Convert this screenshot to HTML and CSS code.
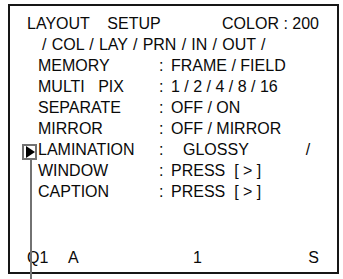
FILE: index.html
```html
<!DOCTYPE html>
<html>
<head>
<meta charset="utf-8">
<link rel="stylesheet" href="styles.css">
</head>
<body>
<div class="screen">
  <div class="head-row">
    <span class="title">LAYOUT    SETUP</span>
    <span class="color">COLOR : 200</span>
  </div>
  <div class="nav-row">/ COL / LAY / PRN / IN / OUT /</div>
  <div class="items">
    <span class="label">MEMORY</span><span class="colon">:</span><span class="value">FRAME / FIELD</span>
    <span class="label">MULTI   PIX</span><span class="colon">:</span><span class="value">1 / 2 / 4 / 8 / 16</span>
    <span class="label">SEPARATE</span><span class="colon">:</span><span class="value">OFF / ON</span>
    <span class="label">MIRROR</span><span class="colon">:</span><span class="value">OFF / MIRROR</span>
    <span class="label current"><span class="marker"><svg class="tri" viewBox="0 0 9 12" width="9" height="12"><polygon points="0,0 9,6 0,12" fill="#000"/></svg></span>LAMINATION</span><span class="colon">:</span><span class="value"><span class="glossy">GLOSSY</span><span class="slash">/</span></span>
    <span class="label">WINDOW</span><span class="colon">:</span><span class="value">PRESS  [ &gt; ]</span>
    <span class="label">CAPTION</span><span class="colon">:</span><span class="value">PRESS  [ &gt; ]</span>
  </div>
  <div class="footer">
    <span>Q1</span><span>A</span><span>1</span><span>S</span>
  </div>
</div>
</body>
</html>
```
FILE: styles.css
```css
html, body {
  margin: 0;
  padding: 0;
  background: #fff;
  overflow: hidden;
}
body {
  width: 343px;
  height: 279px;
  font-family: "Liberation Sans", Arial, sans-serif;
  font-size: 16px;
  color: #0a0a0a;
}
.screen {
  box-sizing: border-box;
  margin: 4px 0 0 8px;
  width: 331px;
  height: 270px;
  border: 2px solid #161616;
  padding-top: 6.5px;
  display: flex;
  flex-direction: column;
  line-height: 21px;
}
.head-row {
  display: flex;
  justify-content: space-between;
  padding: 0 18px 0 17px;
}
.title {
  white-space: pre;
}
.nav-row {
  padding-left: 32px;
  white-space: pre;
  word-spacing: 0.8px;
}
.items {
  display: grid;
  grid-template-columns: 121px 12px auto;
  padding-left: 28px;
}
.label, .value {
  white-space: pre;
}
.current {
  position: relative;
}
.marker {
  position: absolute;
  left: -16px;
  top: 5.5px;
  box-sizing: border-box;
  width: 15px;
  height: 16px;
  border: 2px solid #727272;
  display: flex;
  align-items: center;
  justify-content: center;
}
.marker::after {
  content: "";
  position: absolute;
  left: 6px;
  top: 14px;
  width: 2px;
  height: 125px;
  background: #727272;
}
.tri {
  display: block;
  margin-left: 1px;
}
.glossy {
  margin-left: 12px;
}
.slash {
  margin-left: 57px;
}
.footer {
  margin-top: auto;
  padding: 0 18px 4px 17px;
  display: grid;
  grid-template-columns: 41px 125px 1fr auto;
}
```
